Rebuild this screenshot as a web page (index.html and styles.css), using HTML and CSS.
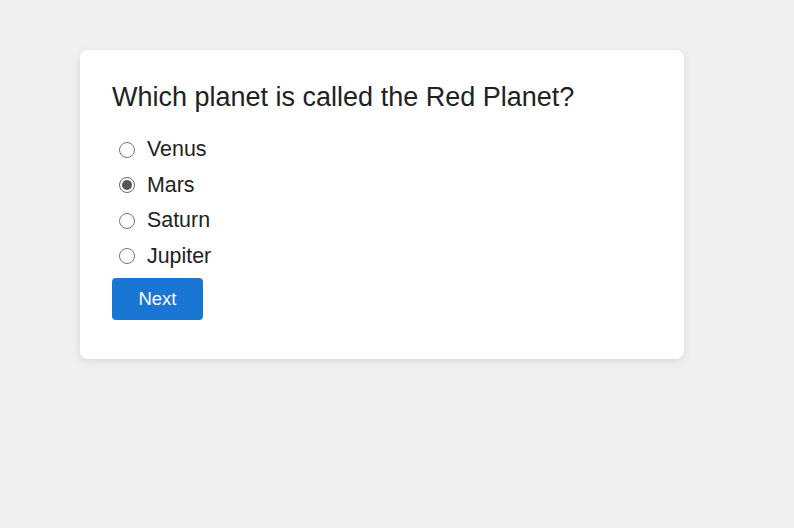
FILE: index.html
```html
<!DOCTYPE html>
<html lang="en">
<head>
<meta charset="utf-8">
<title>Quiz</title>
<link rel="stylesheet" href="styles.css">
</head>
<body>
<div class="card">
  <h2 class="question">Which planet is called the Red Planet?</h2>
  <div class="options">
    <label class="option"><input type="radio" name="q" class="radio"><span>Venus</span></label>
    <label class="option"><input type="radio" name="q" class="radio" checked><span>Mars</span></label>
    <label class="option"><input type="radio" name="q" class="radio"><span>Saturn</span></label>
    <label class="option"><input type="radio" name="q" class="radio"><span>Jupiter</span></label>
  </div>
  <button class="next">Next</button>
</div>
</body>
</html>
```
FILE: styles.css
```css
html, body {
  margin: 0;
  padding: 0;
  background: #f0f0f0;
  font-family: "Liberation Sans", Arial, sans-serif;
  color: #222;
}
body {
  padding: 50px 80px;
}
.card {
  width: 540px;
  padding: 32px;
  background: #fff;
  border-radius: 8px;
  box-shadow: 0 2px 8px rgba(0,0,0,0.1);
  height: 245px;
}
.question {
  margin: 0 0 20px;
  font-size: 27px;
  font-weight: normal;
  line-height: 30px;
}
.options {
  display: flex;
  flex-direction: column;
}
.option {
  display: flex;
  align-items: center;
  gap: 12px;
  height: 35.5px;
  font-size: 21.4px;
  padding-left: 7px;
}
.radio {
  appearance: none;
  margin: 0;
  width: 16px;
  height: 16px;
  border: 1px solid #767676;
  border-radius: 50%;
  background: #fff;
  position: relative;
}
.radio:checked {
  border-color: #666;
}
.radio:checked::after {
  content: "";
  position: absolute;
  left: 2px;
  top: 2px;
  width: 10px;
  height: 10px;
  border-radius: 50%;
  background: #555;
}
.next {
  margin-top: 4px;
  width: 91px;
  height: 42px;
  border: none;
  border-radius: 4px;
  background: #1976d2;
  color: #fff;
  font-family: "Liberation Sans", Arial, sans-serif;
  font-size: 18.5px;
}
```
